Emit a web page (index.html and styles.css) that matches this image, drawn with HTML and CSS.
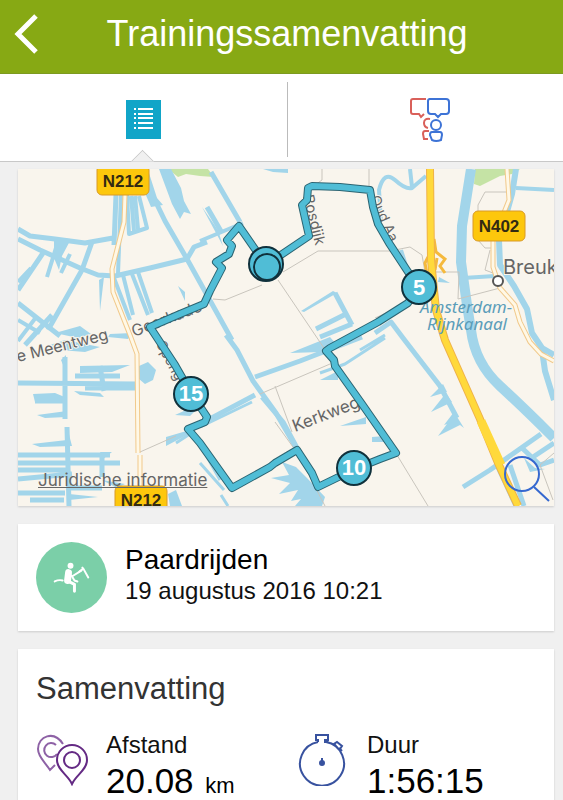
FILE: index.html
```html
<!DOCTYPE html>
<html lang="nl">
<head>
    <meta charset="utf-8">
    <meta name="viewport" content="width=device-width, initial-scale=1">
    <title>Trainingssamenvatting</title>
    <link rel="stylesheet" href="styles.css">
</head>
<body>
    <header class="header">
        <button class="back-button" aria-label="Terug">
            <svg viewBox="0 0 24 40" class="back-icon">
                <path d="M22 2L4 20l18 18"/>
            </svg>
        </button>
        <h1 class="title">Trainingssamenvatting</h1>
    </header>

    <nav class="tabs">
        <a href="#samenvatting" class="tab active" aria-label="Samenvatting">
            <svg viewBox="0 0 35 39" class="list-icon">
                <rect width="35" height="39" fill="#11a5c8"/>
                <path d="M8 9h2M8 14h2M8 18h2M8 23h2M8 28h2M12 9h15M12 14h15M12 18h15M12 23h15M12 28h15" stroke="#fff" stroke-width="2"/>
            </svg>
        </a>
        <a href="#reacties" class="tab" aria-label="Reacties">
            <svg viewBox="0 0 42 46" class="social-icon">
                <g stroke="#d9605a">
                    <path d="M17 2H4Q2 2 2 4v11q0 2 2 2h6l2 3 3-3"/>
                    <path d="M21 22q-6-1-6 4 0 4 4 5M20 34h-4q-2 0-2 3l1 5h4"/>
                </g>
                <g stroke="#3d73d6">
                    <path d="M20 2h17q3 0 3 3v9q0 3-3 3h-5l-3 3-3-3h-4q-3 0-3-3V4q0-2 2-2z"/>
                    <circle cx="27" cy="28" r="5"/>
                    <path d="M23 35h8q2 0 2 3l-1 5q-5 2-9 0l-2-5q0-3 2-3z"/>
                </g>
            </svg>
        </a>
    </nav>

    <main class="content">
        <section class="map-card">
            <svg viewBox="18 169 536 337" class="map">
                <!-- parks -->
                <path class="park" d="M168 169H208L214 177 200 176 186 174 178 177zM475 169H520L512 174 500 176 480 186 474 184z"/>

                <!-- canals and ditches -->
                <g class="water">
                    <path stroke-width="5" d="M18 229L30 236 55 239 85 243 113 238M116 195L114 245M18 239L40 250 80 268 98 275 115 276 150 268 187 259 194 247 207 242"/>
                    <path stroke-width="5" d="M150 190L165 221 187 259 232 340M226 335L237 350 253 381 276 413 298 451M92 242L82 270 48 330M43 253L18 290M52 315L25 345M18 303L60 336M211 172L240 222M207 207L222 233"/>
                    <path stroke-width="4" d="M18 320L40 333M37 316L18 341M200 241L243 223M59 238L47 277M70 254L61 273M114 278L130 320M123 275L133 315M132 274L148 315M138 272L152 313M31 268L18 282"/>
                    <path stroke-width="4" d="M127 195L129 234 147 228 139 196M135 196L138 229M131 196L134 231M121 195L118 274"/>
                    <path stroke-width="5" d="M18 383L136 384M65 357L65 419M67 427L69 506M35 401H65M75 376H120M85 388H135M100 366L104 391M18 455H110M18 463H120M18 470H66M18 479L72 474M102 453V477M18 493H65M30 500H64M69 488H102"/>
                    <path stroke-width="5" d="M204 422L255 395M255 377L300 361 362 337M298 451L321 489M262 397L283 422 297 448"/>
                    <path stroke-width="3" d="M200 427L252 402M320 373L345 364 385 338M360 350L385 335M176 443L193 432 220 480M200 463L224 490M221 495L228 506"/>
                    <path stroke-width="5" d="M335 293L352 325M316 329L344 315M320 337L352 324M375 333L391 322 403 338 440 386 457 418"/>
                    <path stroke-width="4" d="M381 222L379 190Q384 170 395 180T412 188L426 176M412 187L410 169M401 250L409 275M463 278L495 276M516 188L554 190"/>
                    <path stroke-width="5" d="M463 487L490 470 541 434M521 447L540 465 554 460M497 465L516 506M510 465L524 506M530 459L554 443"/>
                    <path stroke-width="10" d="M471 169L462 226 461 262 467 305 471 330Q475 363 500 386T554 438"/>
                    <path stroke-width="6" d="M516 169L512 194 499 240 500 265 514 286 527 309 532 333 542 348 554 355M542 350L545 371 554 400"/>
                </g>
                <g class="water-fill">
                    <path d="M159 169H171L181 188 184 201 191 214 184 212 180 219 172 204zM148 170L157 198 163 205 151 207 145 193zM54 238L71 239 62 256 59 270 54 258zM99 280L104 277 100 311zM178 286L185 292V301zM202 207L223 246 218 230zM263 169H288V173L273 172z"/>
                    <path d="M55 333L80 326 91 334 78 338zM110 334L132 333 128 339 108 337zM50 345L65 340 100 347 85 352 60 350zM139 366L148 362 156 370 153 380 145 384 139 379zM61 360L66 355V372zM33 394L55 393 67 398V402H35zM80 366L130 365 112 372 80 373zM74 391L100 393 104 397 80 395zM37 415L67 411V417L45 418zM32 444L67 440V427L72 446 40 447zM100 452L112 452 103 459zM102 480L125 484 117 488zM69 494L98 497 69 500z"/>
                    <path d="M301 311L333 291 337 293 304 312zM290 353L330 337 337 345 321 352zM320 380L338 371V380zM340 426L366 417V424zM372 442V437L385 436V442zM175 415L204 402 190 416zM166 437L200 427 185 436 166 446z"/>
                    <path d="M282 462L296 467 307 478 325 497 322 506H295L301 499 291 501 298 490 279 494 290 483 271 478 289 475zM430 397L443 384 447 392zM431 412L446 393 452 402zM438 436L447 424 444 425 454 412 464 428 460 425zM439 277L450 283 438 282zM524 458L535 468 545 469 530 472zM168 494L176 490 182 506H170z"/>
                </g>

                <!-- parcel lines and small tracks -->
                <path class="track" d="M213 299L225 300 262 285M283 272L318 251H390L410 247 422 255 425 272H459L458 299 500 288M278 280L330 357M322 169V180L315 185M369 169V187M375 318L415 300M508 192H485L478 205V240L485 248H492M140 452L176 436M260 394L330 364M275 386L292 432M275 422L298 454 325 506M397 455L428 506M554 453L540 465 553 500M490 250L485 270 493 273"/>

                <!-- roads -->
                <path class="road-edge" d="M125 195L124 222 112 269 113 292 130 335 137 354 138 453M140 455V490M507 169L509 200 493 240 493 267 500 288 515 305 520 322 530 342 541 354 554 361"/>
                <path class="road" d="M125 195L124 222 112 269 113 292 130 335 137 354 138 453M140 455V490M507 169L509 200 493 240 493 267 500 288 515 305 520 322 530 342 541 354 554 361"/>
                <path class="ramp" d="M434 239L436 252 445 259 440 266 445 273M428 257L425 263 427 274M437 258L435 270"/>
                <path class="highway-edge" d="M430 169L431 260 436 310 445 340 480 419 498 463 518 506"/>
                <path class="highway" d="M430 169L431 260 436 310 445 340 480 419 498 463 518 506"/>
                <path class="highway wide" d="M481 421L501 465"/>

                <!-- place names -->
                <g class="label">
                    <text x="18" y="362" font-size="16" transform="rotate(-14 18 362)">e Meentweg</text>
                    <text x="134" y="337" font-size="16" transform="rotate(-21 134 337)">Geerkade</text>
                    <text x="295" y="432" font-size="17" transform="rotate(-21 295 432)">Kerkweg</text>
                    <text x="303" y="196" font-size="15" transform="rotate(76 303 196)">Bosdijk</text>
                    <text x="370" y="198" font-size="14" transform="rotate(66 370 198)">Oud Aa</text>
                    <text x="156" y="344" font-size="14" transform="rotate(62 156 344)">Spengen</text>
                    <text x="503" y="274" font-size="20">Breuk</text>
                </g>
                <g class="water-label">
                    <text x="420" y="313">Amsterdam-</text>
                    <text x="427" y="330">Rijnkanaal</text>
                </g>
                <circle cx="498" cy="281" r="5" fill="#fff" stroke="#555" stroke-width="2"/>

                <!-- road signs -->
                <g class="sign">
                    <rect x="97" y="165" width="52" height="30" rx="5"/>
                    <text x="123" y="187">N212</text>
                    <rect x="473" y="211" width="52" height="30" rx="5"/>
                    <text x="499" y="232">N402</text>
                    <rect x="115" y="486" width="52" height="30" rx="5"/>
                    <text x="141" y="506">N212</text>
                </g>

                <!-- ridden route -->
                <path class="route-edge" d="M266 265L309 236 302 205 307 200 308 188 312 186 340 187 370 190 373 207 378 224 389 243 418 287 408 303 378 322 330 348 326 351 334 360 335 366 362 404 396 453 380 459 355 469 318 487 312 473 297 450 275 463 270 467 232 488 200 443 188 429 205 422 207 417 191 393 175 365 150 327 180 314 204 304 210 291 222 268 216 262 229 254 232 246 227 240 239 226z"/>
                <path class="route" d="M266 265L309 236 302 205 307 200 308 188 312 186 340 187 370 190 373 207 378 224 389 243 418 287 408 303 378 322 330 348 326 351 334 360 335 366 362 404 396 453 380 459 355 469 318 487 312 473 297 450 275 463 270 467 232 488 200 443 188 429 205 422 207 417 191 393 175 365 150 327 180 314 204 304 210 291 222 268 216 262 229 254 232 246 227 240 239 226z"/>
                <g class="marker">
                    <circle cx="266" cy="264" r="17"/>
                    <circle cx="267" cy="267" r="13" stroke-width="3"/>
                    <circle cx="419" cy="287" r="17"/>
                    <text x="419" y="295">5</text>
                    <circle cx="354" cy="468" r="17"/>
                    <text x="354" y="475">10</text>
                    <circle cx="191" cy="394" r="17"/>
                    <text x="191" y="401">15</text>
                </g>
            </svg>
            <a href="#juridisch" class="legal-link">Juridische informatie</a>
            <button class="zoom-button" aria-label="Kaart vergroten">
                <svg viewBox="0 0 48 48" class="zoom-icon">
                    <circle cx="19" cy="19" r="17"/>
                    <path d="M31 32l15 14"/>
                </svg>
            </button>
        </section>

        <section class="card activity">
            <svg viewBox="0 0 72 72" class="activity-icon">
                <circle cx="36" cy="36" r="36" fill="#7bcfa8"/>
                <g fill="none" stroke="#fff" stroke-linecap="round" stroke-linejoin="round">
                    <circle cx="35" cy="24" r="3" fill="#fff" stroke="none"/>
                    <path d="M33 31l-1 8" stroke-width="7"/>
                    <path d="M33 40l6 3v7" stroke-width="3"/>
                    <path d="M36 34l3 5 3 1M38 34l8-5" stroke-width="2"/>
                    <path d="M19 40q4-2 8-1M44 30l4-3 5 9M48 27l-1-1" stroke-width="2"/>
                </g>
            </svg>
            <div class="activity-info">
                <h2 class="activity-name">Paardrijden</h2>
                <time class="activity-date" datetime="2016-08-19T10:21">19 augustus 2016 10:21</time>
            </div>
        </section>

        <section class="card summary" id="samenvatting">
            <h2 class="summary-title">Samenvatting</h2>
            <div class="stats">
                <div class="stat">
                    <svg viewBox="0 0 54 52" class="stat-icon">
                        <g stroke="#8e62a6">
                            <path d="M27 10C18-4 2 2 2 15c0 8 7 13 12 21l5-5"/>
                            <path d="M20 11a7 7 0 1 0 1 9"/>
                        </g>
                        <g stroke="#642a84">
                            <path d="M36 50C32 41 21 36 21 26a15 15 0 0 1 30 0c0 10-11 15-15 24z"/>
                            <circle cx="36" cy="26" r="8"/>
                        </g>
                    </svg>
                    <div class="stat-info">
                        <span class="stat-label">Afstand</span>
                        <span class="stat-value">20.08 <small class="stat-unit">km</small></span>
                    </div>
                </div>
                <div class="stat">
                    <svg viewBox="0 0 54 52" class="stat-icon">
                        <g stroke="#38529f">
                            <path d="M21 8a22 22 0 1 0 8 0M29 8q6 1 10 4M42 14l3 3"/>
                            <path d="M21 8V6h-2V1h12v5h-3v3M39 12l-2-2 3-2 5 4-2 3"/>
                            <path d="M25 24v5"/>
                            <circle cx="25" cy="29" r="2" fill="#38529f"/>
                        </g>
                    </svg>
                    <div class="stat-info">
                        <span class="stat-label">Duur</span>
                        <span class="stat-value">1:56:15</span>
                    </div>
                </div>
            </div>
        </section>
    </main>
</body>
</html>
```

FILE: styles.css
```css
* {
    box-sizing: border-box;
}

body {
    margin: 0;
    background: #f0f0f0;
    color: #111;
    font-family: "Liberation Sans", Arial, sans-serif;
}

h1,
h2 {
    margin: 0;
    font-weight: 400;
}

button {
    padding: 0;
    border: none;
    background: none;
    cursor: pointer;
}

svg {
    display: block;
}

/* Header */
.header {
    display: grid;
    grid-template-columns: 48px 1fr 37px;
    align-items: center;
    height: 74px;
    padding-bottom: 6px;
    background: #87a914;
    border-bottom: 1px solid #7c9a20;
}

.back-button {
    display: flex;
    padding-left: 14px;
}

.back-icon {
    width: 24px;
    height: 40px;
    fill: none;
    stroke: #fff;
    stroke-width: 5;
}

.title {
    color: #fff;
    font-size: 36px;
    line-height: 40px;
    text-align: center;
    white-space: nowrap;
}

/* Tabs */
.tabs {
    display: grid;
    grid-template-columns: 51% 1fr;
    height: 88px;
    padding: 8px 0 4px;
    background: #fff;
    border-bottom: 1px solid #c8c8c8;
}

.tab {
    position: relative;
    display: flex;
    align-items: center;
    justify-content: center;
}

.tab + .tab {
    padding-left: 8px;
    border-left: 1px solid #bbb;
}

.tab.active::after {
    content: "";
    position: absolute;
    bottom: -13px;
    left: 50%;
    width: 16px;
    height: 16px;
    margin-left: -10px;
    background: #f0f0f0;
    border: 1px solid #c8c8c8;
    border-right: none;
    border-bottom: none;
    transform: rotate(45deg);
    clip-path: polygon(0 0, 100% 0, 0 100%);
}

.list-icon {
    width: 35px;
    height: 39px;
}

.social-icon {
    width: 42px;
    height: 46px;
    fill: none;
    stroke-width: 2;
}

/* Cards */
.content {
    display: flex;
    flex-direction: column;
    gap: 18px;
    padding: 7px 9px 0 18px;
}

.card,
.map-card {
    background: #fff;
    box-shadow: 0 1px 2px rgba(0, 0, 0, 0.15);
}

/* Map */
.map-card {
    position: relative;
    background: #f9f5ed;
}

.map {
    width: 100%;
    height: auto;
    fill: none;
}

.park {
    fill: #c5e3a5;
}

.water {
    stroke: #a2d5ea;
    stroke-linejoin: round;
}

.water-fill {
    fill: #a2d5ea;
}

.track {
    stroke: #c9c5bd;
    stroke-width: 1;
}

.road-edge {
    stroke: #f1c98b;
    stroke-width: 5;
}

.road {
    stroke: #fff8e6;
    stroke-width: 3;
}

.ramp {
    stroke: #f5b93c;
    stroke-width: 3;
}

.highway-edge {
    stroke: #efb24a;
    stroke-width: 8;
}

.highway {
    stroke: #ffd93b;
    stroke-width: 6;
}

.highway.wide {
    stroke-width: 9;
}

.label {
    fill: #666;
    stroke: #f9f5ed;
    stroke-width: 2;
    paint-order: stroke;
    font-family: Inter, sans-serif;
}

.water-label {
    fill: #5b9db9;
    font-family: "Noto Sans", sans-serif;
    font-size: 17px;
    font-style: italic;
}

.sign rect {
    fill: #fdc70c;
    stroke: #d99a26;
    stroke-width: 1;
}

.sign text {
    fill: #332b12;
    font-size: 17px;
    font-weight: 700;
    text-anchor: middle;
}

.route-edge {
    stroke: #2b6472;
    stroke-width: 8;
    stroke-linejoin: round;
}

.route {
    stroke: #50bdd6;
    stroke-width: 6;
    stroke-linejoin: round;
}

.marker circle {
    fill: #50bdd6;
    stroke: #10313c;
    stroke-width: 2;
}

.marker text {
    fill: #fff;
    font-size: 22px;
    font-weight: 700;
    text-anchor: middle;
}

.legal-link {
    position: absolute;
    bottom: 16px;
    left: 20px;
    color: #666;
    font-family: Inter, sans-serif;
    font-size: 17px;
    line-height: 20px;
}

.zoom-button {
    position: absolute;
    right: 3px;
    bottom: 3px;
}

.zoom-icon {
    width: 48px;
    height: 48px;
    fill: none;
    stroke: #3568cf;
    stroke-width: 2;
}

/* Activity */
.activity {
    display: flex;
    align-items: center;
    gap: 18px;
    padding: 18px;
}

.activity-icon {
    flex: none;
    width: 71px;
    height: 71px;
}

.activity-info {
    padding-bottom: 5px;
}

.activity-name {
    color: #000;
    font-size: 28px;
    line-height: 32px;
}

.activity-date {
    display: block;
    font-size: 24px;
    line-height: 30px;
}

/* Summary */
.summary {
    padding: 20px 18px 24px;
}

.summary-title {
    color: #333;
    font-size: 31px;
    line-height: 40px;
}

.stats {
    display: grid;
    grid-template-columns: 261px 1fr;
    margin-top: 21px;
}

.stat {
    display: flex;
    gap: 16px;
}

.stat-icon {
    flex: none;
    width: 54px;
    height: 52px;
    margin-top: 4px;
    fill: none;
    stroke-width: 2;
}

.stat-info {
    display: flex;
    flex-direction: column;
}

.stat-label {
    font-size: 24px;
    line-height: 30px;
}

.stat-value {
    color: #000;
    font-size: 35px;
    line-height: 42px;
}

.stat-unit {
    margin-left: 2px;
    font-size: 22px;
}
```
